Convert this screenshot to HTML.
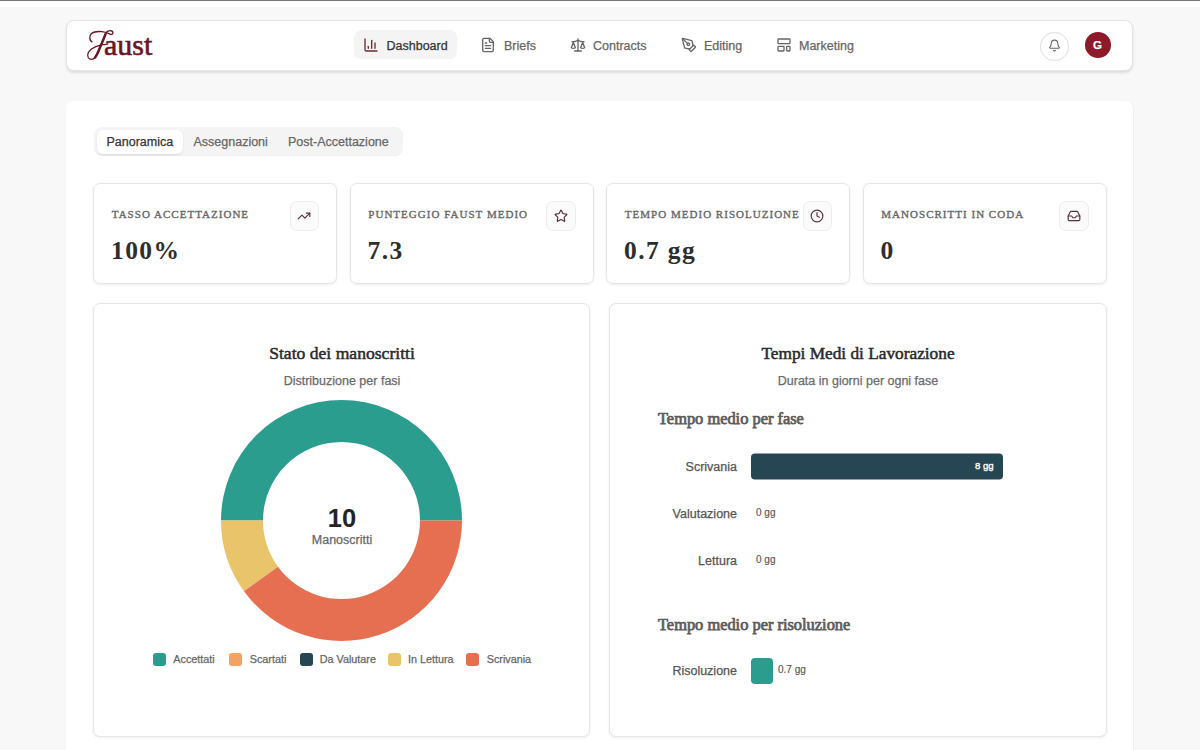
<!DOCTYPE html>
<html><head><meta charset="utf-8">
<style>
*{box-sizing:border-box;margin:0;padding:0}
html,body{width:1200px;height:750px;overflow:hidden;background:#f8f8f8;font-family:"Liberation Sans",sans-serif;color:#333}
.a{position:absolute;white-space:nowrap}
.t{position:absolute;white-space:nowrap;line-height:1;-webkit-text-stroke:0.25px currentColor}
.serif,.val{-webkit-text-stroke:0}
.t.lbl{-webkit-text-stroke:0.35px #666}
.t.sec{-webkit-text-stroke:0.75px #5c5c5c}
.card{position:absolute;background:#fff;border:1px solid #e6e6e6;border-radius:7px;box-shadow:0 1px 3px rgba(0,0,0,.07)}
.ico{position:absolute;fill:none;stroke-linecap:round;stroke-linejoin:round;stroke-width:2}
.nav{font-size:12.5px;color:#666}
.serif{font-family:"Liberation Serif",serif}
.lbl{font-family:"Liberation Serif",serif;font-size:11px;letter-spacing:1.02px;color:#666}
.val{font-family:"Liberation Serif",serif;font-size:25.5px;letter-spacing:1.4px;font-weight:bold;color:#2e2e2e}
.ib{position:absolute;width:29.5px;height:29.5px;border:1px solid #ececec;border-radius:7px;background:#fbfbfb}
.leg{font-size:10.8px;color:#666}
.sw{position:absolute;width:13px;height:13px;border-radius:3px;top:652.5px}
.rl{font-size:12.5px;color:#555;text-align:right}
.sec{font-family:"Liberation Serif",serif;font-size:16.4px;color:#5a5a5a}
.bv{font-size:10px;color:#555;-webkit-text-stroke:0.15px #555 !important}
</style></head><body>
<div class="a" style="left:0;top:0;width:1200px;height:1px;background:#777"></div>
<div class="a" style="left:0;top:1px;width:1200px;height:6px;background:#fff"></div>

<!-- header -->
<div class="card" style="left:66.2px;top:20px;width:1066.8px;height:51px;border-color:#e4e4e4;border-radius:8px;box-shadow:0 2px 3px rgba(0,0,0,.11)"></div>
<svg class="a" style="left:0;top:0" width="1200" height="100" viewBox="0 0 1200 100">
  <g fill="none" stroke="#6b1424" stroke-linecap="round" stroke-linejoin="round">
    <path d="M91.9 41.9C89.5 40.5 88.8 36 91.5 33.5C94 31.5 98 31.3 102 31.6C105 31.9 108 33 110 34.2C112 35 113.3 33.5 112.8 32C112.2 30.5 110 30.3 108 31.2C107 31.7 106.3 32.3 105.8 33" stroke-width="1.4"/>
    <path d="M105.8 33C104 37 102 42 100 47C98.5 51 97 55.5 94.5 58C92.5 59.8 89.5 60 88.2 57.5C87 55 88.5 51.5 91.5 49C94 47 98 45.5 101.5 44.8C103.5 44.5 105 44.4 106 44.4" stroke-width="1.3"/>
    <path d="M105.6 34C104 38 102 43 100 47.5C98.5 51.5 97 55 95 57.5" stroke-width="2.4"/>
  </g>
</svg>
<div class="t serif" style="left:104px;top:30.4px;font-size:30px;color:#6b1424;-webkit-text-stroke:0.6px #6b1424">aust</div>

<div class="a" style="left:353.7px;top:30.4px;width:103px;height:28.9px;background:#f4f4f4;border-radius:7px"></div>
<svg class="ico" style="left:363px;top:37.1px;stroke:#6b2a35" width="16" height="16" viewBox="0 0 24 24"><path d="M3 3v16a2 2 0 0 0 2 2h16"/><path d="M18 17V9"/><path d="M13 17V5"/><path d="M8 17v-3"/></svg>
<div class="t nav" style="left:386.5px;top:39.9px;color:#333">Dashboard</div>
<svg class="ico" style="left:480px;top:37.1px;stroke:#666" width="16" height="16" viewBox="0 0 24 24"><path d="M15 2H6a2 2 0 0 0-2 2v16a2 2 0 0 0 2 2h12a2 2 0 0 0 2-2V7Z"/><path d="M14 2v4a2 2 0 0 0 2 2h4"/><path d="M10 9H8"/><path d="M16 13H8"/><path d="M16 17H8"/></svg>
<div class="t nav" style="left:504px;top:39.9px">Briefs</div>
<svg class="ico" style="left:570px;top:36.8px;stroke:#666" width="16" height="16" viewBox="0 0 24 24"><path d="m16 16 3-8 3 8c-.87.65-1.92 1-3 1s-2.13-.35-3-1Z"/><path d="m2 16 3-8 3 8c-.87.65-1.92 1-3 1s-2.13-.35-3-1Z"/><path d="M7 21h10"/><path d="M12 3v18"/><path d="M3 7h2c2 0 5-1 7-2 2 1 5 2 7 2h2"/></svg>
<div class="t nav" style="left:593px;top:39.9px">Contracts</div>
<svg class="ico" style="left:681px;top:37.1px;stroke:#666" width="16" height="16" viewBox="0 0 24 24"><path d="M15.707 21.293a1 1 0 0 1-1.414 0l-1.586-1.586a1 1 0 0 1 0-1.414l5.586-5.586a1 1 0 0 1 1.414 0l1.586 1.586a1 1 0 0 1 0 1.414z"/><path d="m18 13-1.375-6.874a1 1 0 0 0-.746-.776L3.235 2.028a1 1 0 0 0-1.207 1.207L5.35 15.879a1 1 0 0 0 .776.746L13 18"/><path d="m2.3 2.3 7.286 7.286"/><circle cx="11" cy="11" r="2"/></svg>
<div class="t nav" style="left:704px;top:39.9px">Editing</div>
<svg class="ico" style="left:776px;top:37.1px;stroke:#666" width="16" height="16" viewBox="0 0 24 24"><rect width="18" height="7" x="3" y="3" rx="1"/><rect width="9" height="7" x="3" y="14" rx="1"/><rect width="5" height="7" x="16" y="14" rx="1"/></svg>
<div class="t nav" style="left:799px;top:39.9px">Marketing</div>

<div class="a" style="left:1039.5px;top:31.5px;width:29px;height:29px;border:1px solid #e2e2e2;border-radius:50%;background:#fff;box-shadow:0 0 1px rgba(0,0,0,.06)"></div>
<svg class="ico" style="left:1047.5px;top:38.5px;stroke:#666;stroke-width:2" width="13" height="13" viewBox="0 0 24 24"><path d="M10.268 21a2 2 0 0 0 3.464 0"/><path d="M3.262 15.326A1 1 0 0 0 4 17h16a1 1 0 0 0 .74-1.673C19.41 13.956 18 12.499 18 8A6 6 0 0 0 6 8c0 4.499-1.411 5.956-2.738 7.326"/></svg>
<div class="a" style="left:1084.5px;top:32px;width:26.5px;height:26px;background:#8c1a2b;border-radius:50%"></div>
<div class="t" style="left:1084px;top:40px;width:27px;text-align:center;font-size:11.5px;font-weight:bold;color:#fff">G</div>

<!-- main -->
<div class="a" style="left:66.3px;top:100.5px;width:1068.2px;height:700px;background:#fff;border-radius:8px;border-right:1px solid #efefef"></div>
<div class="a" style="left:93.8px;top:127.3px;width:309px;height:29.2px;background:#f4f4f4;border-radius:8px;box-shadow:inset 0 -1px 0 rgba(0,0,0,.025)"></div>
<div class="a" style="left:97.2px;top:129.5px;width:85.5px;height:24px;background:#fff;border-radius:6px;box-shadow:0 1px 2px rgba(0,0,0,.1)"></div>
<div class="t nav" style="left:106.5px;top:135.5px;color:#333">Panoramica</div>
<div class="t nav" style="left:193.5px;top:135.5px">Assegnazioni</div>
<div class="t nav" style="left:288px;top:135.5px">Post-Accettazione</div>

<!-- stat cards -->
<div class="card" style="left:93.1px;top:183.2px;width:244.4px;height:100.8px"></div>
<div class="card" style="left:349.7px;top:183.2px;width:243.9px;height:100.8px"></div>
<div class="card" style="left:606.3px;top:183.2px;width:244px;height:100.8px"></div>
<div class="card" style="left:862.5px;top:183.2px;width:244.6px;height:100.8px"></div>
<div class="t lbl" style="left:111.8px;top:209.4px">TASSO ACCETTAZIONE</div>
<div class="t lbl" style="left:368.3px;top:209.4px">PUNTEGGIO FAUST MEDIO</div>
<div class="t lbl" style="left:624.8px;top:209.4px">TEMPO MEDIO RISOLUZIONE</div>
<div class="t lbl" style="left:881.3px;top:209.4px">MANOSCRITTI IN CODA</div>
<div class="t val" style="left:111px;top:237.6px">100%</div>
<div class="t val" style="left:367.5px;top:237.6px">7.3</div>
<div class="t val" style="left:624px;top:237.6px">0.7 gg</div>
<div class="t val" style="left:880.5px;top:237.6px">0</div>
<div class="ib" style="left:289.5px;top:201px"></div>
<div class="ib" style="left:546px;top:201px"></div>
<div class="ib" style="left:802.5px;top:201px"></div>
<div class="ib" style="left:1059px;top:201px"></div>
<svg class="ico" style="left:297.2px;top:208.5px;stroke:#55303a" width="14" height="14" viewBox="0 0 24 24"><path d="M22 7 13.5 15.5 8.5 10.5 2 17"/><path d="M16 7h6v6"/></svg>
<svg class="ico" style="left:553.8px;top:208.5px;stroke:#55303a" width="14" height="14" viewBox="0 0 24 24"><path d="M11.525 2.295a.53.53 0 0 1 .95 0l2.31 4.679a2.123 2.123 0 0 0 1.595 1.16l5.166.756a.53.53 0 0 1 .294.904l-3.736 3.638a2.123 2.123 0 0 0-.611 1.878l.882 5.14a.53.53 0 0 1-.771.56l-4.618-2.428a2.122 2.122 0 0 0-1.973 0L6.396 21.01a.53.53 0 0 1-.77-.56l.881-5.139a2.122 2.122 0 0 0-.611-1.879L2.16 9.795a.53.53 0 0 1 .294-.906l5.165-.755a2.122 2.122 0 0 0 1.597-1.16z"/></svg>
<svg class="ico" style="left:810.2px;top:208.5px;stroke:#55303a" width="14" height="14" viewBox="0 0 24 24"><circle cx="12" cy="12" r="10"/><polyline points="12 6 12 12 16 14"/></svg>
<svg class="ico" style="left:1066.8px;top:208.8px;stroke:#55303a" width="14" height="14" viewBox="0 0 24 24"><polyline points="22 12 16 12 14 15 10 15 8 12 2 12"/><path d="M5.45 5.11 2 12v6a2 2 0 0 0 2 2h16a2 2 0 0 0 2-2v-6l-3.45-6.89A2 2 0 0 0 16.76 4H7.24a2 2 0 0 0-1.79 1.11z"/></svg>

<!-- chart cards -->
<div class="card" style="left:92.9px;top:303px;width:497.5px;height:433.7px"></div>
<div class="card" style="left:609.4px;top:303px;width:497.6px;height:433.7px"></div>
<div class="t serif" style="left:94px;width:496px;text-align:center;top:345.3px;font-size:17.6px;color:#2a2a2a;-webkit-text-stroke:0.5px #2a2a2a">Stato dei manoscritti</div>
<div class="t" style="left:94px;width:496px;text-align:center;top:375px;font-size:12.5px;color:#6a6a6a">Distribuzione per fasi</div>
<div class="t serif" style="left:610px;width:496px;text-align:center;top:345.3px;font-size:17.3px;color:#2a2a2a;-webkit-text-stroke:0.5px #2a2a2a">Tempi Medi di Lavorazione</div>
<div class="t" style="left:610px;width:496px;text-align:center;top:375px;font-size:12.5px;color:#6a6a6a">Durata in giorni per ogni fase</div>

<svg class="a" style="left:0;top:0" width="1200" height="750" viewBox="0 0 1200 750">
<path d="M462.00 520.50A120.5 120.5 0 0 0 221.00 520.50L263.00 520.50A78.5 78.5 0 0 1 420.00 520.50Z" fill="#2a9d8f"/>
<path d="M221.00 520.50A120.5 120.5 0 0 0 244.01 591.33L277.99 566.64A78.5 78.5 0 0 1 263.00 520.50Z" fill="#e9c46a"/>
<path d="M244.01 591.33A120.5 120.5 0 0 0 462.00 520.50L420.00 520.50A78.5 78.5 0 0 1 277.99 566.64Z" fill="#e76f51"/>
<rect x="751" y="453.5" width="252" height="26" rx="4" fill="#264653"/>
<rect x="751" y="658" width="22" height="26" rx="4" fill="#2a9d8f"/>
</svg>
<div class="t" style="left:94px;width:496px;text-align:center;top:506.1px;font-size:25.5px;font-weight:bold;color:#242424;-webkit-text-stroke:0">10</div>
<div class="t" style="left:94px;width:496px;text-align:center;top:534.2px;font-size:12.5px;color:#666">Manoscritti</div>

<div class="sw" style="left:153px;background:#2a9d8f"></div>
<div class="t leg" style="left:173.3px;top:654px">Accettati</div>
<div class="sw" style="left:229px;background:#f4a261"></div>
<div class="t leg" style="left:249.7px;top:654px">Scartati</div>
<div class="sw" style="left:299.7px;background:#264653"></div>
<div class="t leg" style="left:319.7px;top:654px">Da Valutare</div>
<div class="sw" style="left:388px;background:#e9c46a"></div>
<div class="t leg" style="left:408px;top:654px">In Lettura</div>
<div class="sw" style="left:466.3px;background:#e76f51"></div>
<div class="t leg" style="left:486.7px;top:654px">Scrivania</div>

<div class="t sec" style="left:658px;top:410.8px">Tempo medio per fase</div>
<div class="t sec" style="left:658px;top:617.3px">Tempo medio per risoluzione</div>
<div class="t rl" style="left:637px;width:100px;top:460.7px">Scrivania</div>
<div class="t rl" style="left:637px;width:100px;top:507.7px">Valutazione</div>
<div class="t rl" style="left:637px;width:100px;top:554.7px">Lettura</div>
<div class="t rl" style="left:637px;width:100px;top:664.5px">Risoluzione</div>
<div class="t" style="left:975px;top:460.9px;font-size:9.6px;color:#fff;-webkit-text-stroke:0.35px #fff">8 gg</div>
<div class="t bv" style="left:756px;top:507.6px">0 gg</div>
<div class="t bv" style="left:756px;top:554.6px">0 gg</div>
<div class="t bv" style="left:778px;top:664.6px">0.7 gg</div>
</body></html>
